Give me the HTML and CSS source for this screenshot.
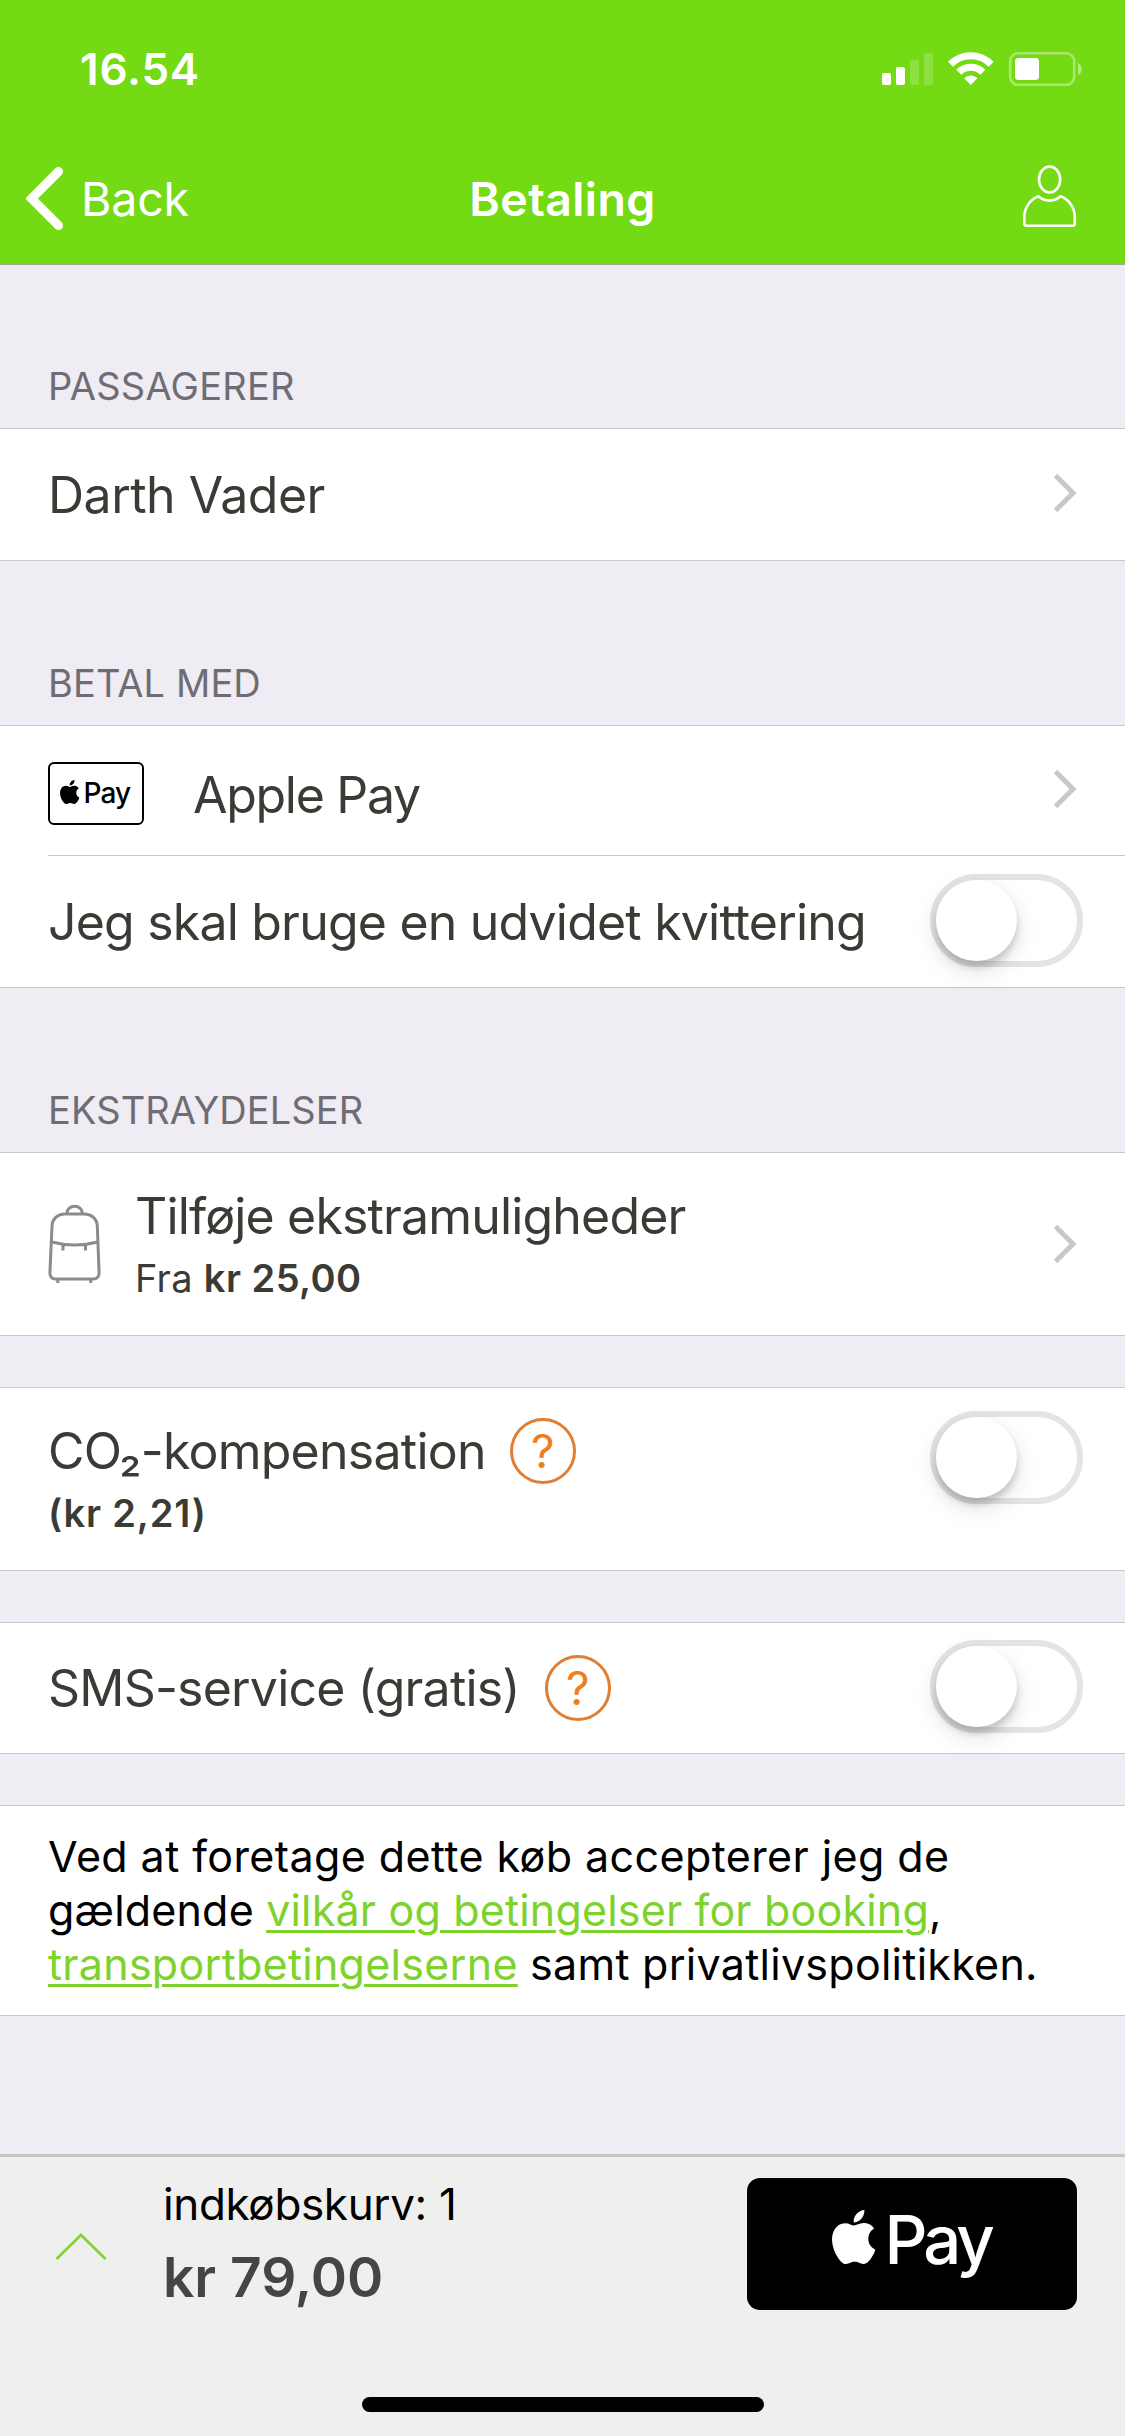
FILE: index.html
```
<!DOCTYPE html>
<html lang="da">
<head>
<meta charset="utf-8">
<title>Betaling</title>
<link rel="stylesheet" href="styles.css">
</head>
<body>
<svg class="defs" width="0" height="0" aria-hidden="true">
  <symbol id="apple" viewBox="2.2 0 19.6 24" preserveAspectRatio="none">
    <path fill="currentColor" d="M12.152 6.896c-.948 0-2.415-1.078-3.96-1.04-2.04.027-3.91 1.183-4.961 3.014-2.117 3.675-.546 9.103 1.519 12.09 1.013 1.454 2.208 3.09 3.792 3.039 1.52-.065 2.09-.987 3.935-.987 1.831 0 2.35.987 3.96.948 1.637-.026 2.676-1.48 3.676-2.948 1.156-1.688 1.636-3.325 1.662-3.415-.039-.013-3.182-1.221-3.22-4.857-.026-3.04 2.48-4.494 2.597-4.559-1.429-2.09-3.623-2.324-4.39-2.376-2-.156-3.675 1.09-4.61 1.09zM15.53 3.83c.843-1.012 1.4-2.427 1.245-3.83-1.207.052-2.662.805-3.532 1.818-.78.896-1.454 2.338-1.273 3.714 1.338.104 2.715-.688 3.559-1.701"/>
  </symbol>
  <symbol id="chevron" viewBox="0 0 24 40">
    <path d="M2.5 2.5 20 20 2.5 37.500" fill="none" stroke="#c7c7cc" stroke-width="5"/>
  </symbol>
</svg>

<div class="screen">
  <header class="header">
    <div class="status">
      <span class="time">16.54</span>
      <svg class="status-icons" width="202" height="36" viewBox="881 51 202 36" fill="#fff">
        <rect x="882" y="73" width="9" height="12" rx="2"/>
        <rect x="896" y="67" width="9" height="18" rx="2"/>
        <rect x="910" y="60" width="9" height="25" rx="2" opacity=".2"/>
        <rect x="924" y="53" width="9" height="32" rx="2" opacity=".2"/>
        <g fill="none" stroke="#fff" stroke-width="7">
          <path d="M950.500 64.200a28.500 28.500 0 0 1 40.600 0"/>
          <path d="M958.800 72.300a17 17 0 0 1 24 0"/>
        </g>
        <path d="M970.800 85l-6.600-6.800a9.600 9.600 0 0 1 13.200 0z"/>
        <rect x="1010.200" y="53.200" width="64" height="31.600" rx="8" fill="none" stroke="#fff" stroke-width="2.600" opacity=".38"/>
        <rect x="1015" y="58" width="24" height="22" rx="3.500"/>
        <path d="M1078 63c5 2 5 10 0 12z" opacity=".45"/>
      </svg>
    </div>
    <nav class="nav">
      <div class="back">
        <svg width="38" height="64" viewBox="26 167 38 64"><path d="M58.500 171.500 31.500 198.500 58.500 225.500" fill="none" stroke="#fff" stroke-width="9" stroke-linecap="round" stroke-linejoin="miter"/></svg>
        <span>Back</span>
      </div>
      <h1 class="title">Betaling</h1>
      <svg class="user" width="55" height="64" viewBox="1022 165 55 64" fill="none" stroke="#fff" stroke-width="2.600" stroke-linejoin="round">
        <ellipse cx="1049.600" cy="179.500" rx="10.600" ry="12.900"/>
        <path d="M1038.500 196.300C1030 199.500 1024.300 208 1024.300 217V223.500Q1024.300 225.700 1026.500 225.700H1072.600Q1074.800 225.700 1074.800 223.500V217C1074.800 208 1069 199.500 1060.600 196.300C1054.500 202 1044.500 202 1038.500 196.300Z"/>
      </svg>
    </nav>
  </header>

  <main class="content">
    <h2 class="section-title wide">PASSAGERER</h2>
    <section class="group">
      <div class="row passenger">
        <span class="label darth">Darth Vader</span>
        <svg class="chevron" width="24" height="40"><use href="#chevron"/></svg>
      </div>
    </section>

    <h2 class="section-title">BETAL MED</h2>
    <section class="group">
      <div class="row method">
        <span class="pay-badge"><svg width="19.500" height="24"><use href="#apple"/></svg><span>Pay</span></span>
        <span class="label pay-label">Apple Pay</span>
        <svg class="chevron" width="24" height="40"><use href="#chevron"/></svg>
      </div>
      <div class="row receipt">
        <span class="label">Jeg skal bruge en udvidet kvittering</span>
        <span class="toggle"><span class="knob"></span></span>
      </div>
    </section>

    <h2 class="section-title">EKSTRAYDELSER</h2>
    <section class="group">
      <div class="row extras">
        <svg class="backpack" width="53" height="80" viewBox="47.500 1204 53 80" fill="none" stroke="#8c8c8c" stroke-width="3">
          <path d="M66.500 1213c0-4 3.500-6.800 7.600-6.800s7.600 2.800 7.600 6.800"/>
          <path d="M64 1214H84C91 1214 96.500 1219 96.800 1226L98.600 1273C98.700 1276.500 96.500 1279 93 1279H54.800C51.300 1279 49.300 1276.500 49.400 1273L51.500 1226C51.800 1219 57 1214 64 1214Z"/>
          <path d="M51.200 1242Q74 1248 97.400 1242M62.500 1245V1250.500M85 1245V1250.500M57.300 1279V1283M90.300 1279V1283"/>
        </svg>
        <div class="stack">
          <span class="label extra-label">Tilføje ekstramuligheder</span>
          <span class="sub">Fra <b>kr 25,00</b></span>
        </div>
        <svg class="chevron" width="24" height="40"><use href="#chevron"/></svg>
      </div>
    </section>

    <section class="group spaced">
      <div class="row co2">
        <div class="stack">
          <div class="with-help co2-line"><span class="label">CO₂-kompensation</span><span class="help">?</span></div>
          <span class="sub co2-price"><b>(kr 2,21)</b></span>
        </div>
        <span class="toggle"><span class="knob"></span></span>
      </div>
    </section>

    <section class="group spaced">
      <div class="row sms">
        <div class="with-help sms-line"><span class="label">SMS-service (gratis)</span><span class="help">?</span></div>
        <span class="toggle"><span class="knob"></span></span>
      </div>
    </section>

    <section class="group spaced">
      <p class="terms"><span class="first-line">Ved at foretage dette køb accepterer jeg de</span><br><span class="second-line">gældende <a>vilkår og betingelser for booking</a>,</span><br><a>transportbetingelserne</a> samt privatlivspolitikken.</p>
    </section>
  </main>

  <footer class="footer">
    <div class="cart">
      <svg class="expand" width="52" height="28" viewBox="55 2233 52 28"><path d="M56.500 2259 81 2235 105.500 2259" fill="none" stroke="#86d23c" stroke-width="2.800"/></svg>
      <div class="totals">
        <span class="basket">indkøbskurv: 1</span>
        <strong class="price">kr 79,00</strong>
      </div>
      <button class="apple-pay" type="button"><svg width="43.500" height="54"><use href="#apple"/></svg><span>Pay</span></button>
    </div>
    <div class="home-bar"></div>
  </footer>
</div>
</body>
</html>
```
FILE: styles.css
```
* { box-sizing: border-box; }

body {
  margin: 0;
  font-family: Inter, "Liberation Sans", sans-serif;
  color: #3b3a34;
  background: #efecf4;
}

svg { display: block; flex: none; }
.defs { position: absolute; }

.screen {
  width: 1125px;
  height: 2436px;
  display: flex;
  flex-direction: column;
  overflow: hidden;
}

/* Header */
.header {
  height: 265px;
  background: #74da14;
  border-bottom: 1px solid #9cac8e;
  color: #fff;
}
.status {
  height: 132px;
  padding: 6px 42px 0 80px;
  display: flex;
  align-items: center;
  justify-content: space-between;
}
.time { font-size: 44px; font-weight: 600; letter-spacing: .8px; }
.nav {
  height: 132px;
  padding: 0 26px;
  display: grid;
  grid-template-columns: 1fr auto 1fr;
  align-items: center;
}
.back {
  display: flex;
  align-items: center;
  gap: 17px;
  padding-top: 1px;
  font-size: 46.5px;
  font-weight: 400;
  letter-spacing: -.2px;
}
.title { margin: 0; padding-top: 1px; font-size: 46.5px; font-weight: 600; letter-spacing: .4px; }
.user { justify-self: end; margin: 0 22px 2px 0; }

/* Lists */
.content { flex: 1; }
.section-title {
  height: 164px;
  margin: 0;
  padding: 0 48px 18px;
  display: flex;
  align-items: flex-end;
  font-size: 38px;
  line-height: 48px;
  font-weight: 400;
  letter-spacing: .1px;
  color: #6f6d74;
}
.section-title.wide { height: 163px; letter-spacing: .25px; }
.group { background: #fff; border: solid #c8c7cc; border-width: 1px 0; }
.spaced { margin-top: 51px; }
.row { display: flex; align-items: center; padding: 0 42px 0 48px; }
.label { font-size: 50px; line-height: 60px; letter-spacing: -.8px; white-space: nowrap; }
.sub { font-size: 38px; line-height: 56px; letter-spacing: .3px; }
.sub b { font-weight: 600; letter-spacing: .45px; }
.stack { display: flex; flex-direction: column; }
.chevron { margin: 0 6px 0 auto; }

.passenger { height: 131px; }
.passenger .chevron { margin-bottom: 4px; }
.darth { letter-spacing: -.5px; }
.method { height: 129px; padding-bottom: 3px; }
.pay-label { margin: 11px 0 0 49px; letter-spacing: -1.3px; }
.receipt { height: 132px; margin-left: 48px; padding-left: 0; border-top: 1px solid #c8c7cc; }
.extras { height: 182px; align-items: flex-start; padding-top: 33px; }
.extras .stack { gap: 4px; }
.extras .chevron { margin-top: 38px; }
.extra-label { letter-spacing: -.84px; }
.backpack { margin: 18px 34px 0 0; }
.co2 { height: 182px; align-items: flex-start; padding-top: 23px; }
.co2 .stack { padding-top: 7px; gap: 1px; }
.co2-line .label { letter-spacing: -.75px; }
.co2-price b { letter-spacing: .85px; }
.sms { height: 130px; }

.pay-badge {
  width: 96px;
  height: 63px;
  margin-top: 8px;
  padding-left: 10px;
  border: 2px solid #000;
  border-radius: 6px;
  display: flex;
  align-items: center;
  gap: 4px;
  color: #000;
  font-size: 28px;
  font-weight: 500;
  letter-spacing: -.9px;
}
.pay-badge svg { margin-bottom: 2px; }

.with-help { display: flex; align-items: center; gap: 24px; }
.sms-line { gap: 25px; margin-bottom: 1px; }
.help {
  width: 66px;
  height: 66px;
  border: 3px solid #e07e33;
  border-radius: 50%;
  display: grid;
  place-items: center;
  color: #f07d1e;
  font-size: 46px;
  line-height: 60px;
  font-weight: 400;
}

.toggle {
  flex: none;
  width: 153px;
  height: 93px;
  margin-left: auto;
  border: 6px solid #e4e4e4;
  border-radius: 47px;
}
.receipt .toggle { margin-bottom: 2px; }
.sms .toggle { margin-bottom: 4px; }
.knob {
  display: block;
  width: 81px;
  height: 81px;
  border-radius: 50%;
  background: #fff;
  box-shadow: 0 9px 24px rgba(0, 0, 0, .13), 0 6px 7px rgba(0, 0, 0, .16);
}

.terms {
  height: 209px;
  margin: 0;
  padding: 23px 48px 0;
  font-size: 43px;
  line-height: 54px;
  letter-spacing: .27px;
  white-space: nowrap;
  color: #000;
}
.first-line { letter-spacing: .41px; }
.second-line { letter-spacing: .18px; }
.terms a {
  color: #7dd22b;
  text-decoration: underline;
  text-decoration-thickness: 3px;
  text-underline-offset: 4px;
}

/* Cart footer */
.footer {
  height: 282px;
  border-top: 3px solid #c6c5c8;
  background: #efefed;
}
.cart { height: 240px; padding: 21px 48px 0 55px; display: flex; align-items: flex-start; }
.expand { margin-top: 55px; }
.totals { margin-left: 56px; display: flex; flex-direction: column; }
.basket { font-size: 44px; line-height: 52px; letter-spacing: -.35px; color: #000; }
.price { font-size: 55px; line-height: 70px; font-weight: 600; margin-top: 12px; color: #454545; }
.apple-pay {
  width: 330px;
  height: 132px;
  margin-left: auto;
  padding: 0 0 0 85px;
  border: 0;
  border-radius: 13px;
  background: #000;
  color: #fff;
  display: flex;
  align-items: flex-start;
  font: 500 67px/80px Inter, "Liberation Sans", sans-serif;
  letter-spacing: -4px;
}
.apple-pay svg { margin-top: 32px; }
.apple-pay span { margin: 22px 0 0 9px; }
.home-bar { width: 402px; height: 15px; margin: 0 auto; border-radius: 8px; background: #000; }
```
